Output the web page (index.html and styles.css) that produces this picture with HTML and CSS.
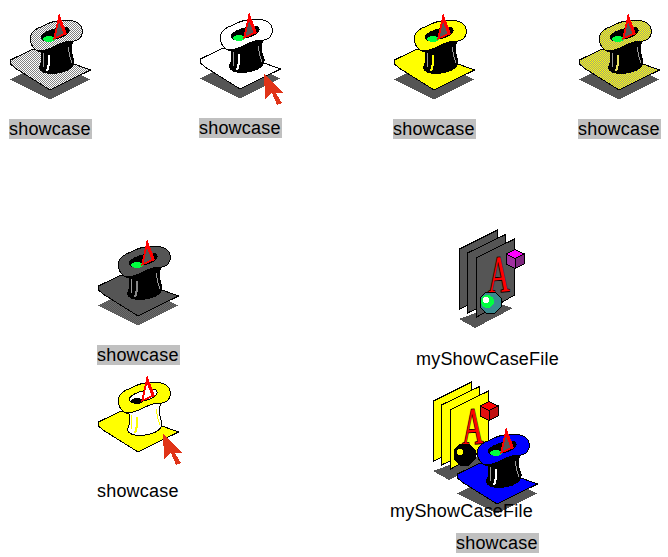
FILE: index.html
```html
<!DOCTYPE html>
<html lang="en">
<head>
<meta charset="utf-8">
<title>showcase icons</title>
<link rel="stylesheet" href="styles.css">
</head>
<body>
<svg class="defs" width="0" height="0" aria-hidden="true">
  <defs>
    <pattern id="d-grey" width="2" height="2" patternUnits="userSpaceOnUse">
      <rect width="2" height="2" fill="#fff"/><rect width="1" height="1" fill="#808080"/><rect x="1" y="1" width="1" height="1" fill="#808080"/>
    </pattern>
    <pattern id="d-yellow" width="2" height="2" patternUnits="userSpaceOnUse">
      <rect width="2" height="2" fill="#ffff00"/><rect width="1" height="1" fill="#a0a080"/><rect x="1" y="1" width="1" height="1" fill="#a0a080"/>
    </pattern>
    <pattern id="d-dark" width="2" height="2" patternUnits="userSpaceOnUse">
      <rect width="2" height="2" fill="#6a6a6a"/><rect width="1" height="1" fill="#555"/><rect x="1" y="1" width="1" height="1" fill="#555"/>
    </pattern>
    <symbol id="hat" viewBox="0 0 110 119">
      <path class="h-shadow" d="M10.5 79.5L50 59L90 79.5L49.5 99.5Z"/>
      <path class="h-plat" d="M10.5 60L33 49L90.5 70L50 90L15 68L10.5 64Z"/>
      <path class="h-crown" d="M40 48C43 57 42 63 39 68C42 73 50 74 57 73C67 72 75 67 74 60C71 55 71 47 73 39Z"/>
      <path class="h-stripe" d="M44 53C43 58 43 63 44 67M68 47C69 53 70 58 72 63"/>
      <path class="h-stripe2" d="M49 55C48 62 50 66 47 71"/>
      <path class="h-plat" d="M30 38C31 32 37 28 43 26C53 20 70 18 78 23C83 27 84 33 80 38C77 42 72 41 65 42C57 44 48 51 40 51C35 51 30 45 30 38Z"/>
      <path class="h-hole" d="M41 37C43 32 58 26 68 28C72 32 65 37 55 39C48 42 42 42 41 37Z"/>
      <ellipse class="h-green" cx="49" cy="39" rx="6" ry="3"/>
      <path class="h-tri-red" d="M59 13L53 40L67 34Z"/>
      <path class="h-tri" d="M59 22L55.5 37L63.5 33.5Z"/>
    </symbol>
    <symbol id="file" viewBox="0 0 150 122">
      <path class="f-shadow" d="M49 94L90 79L103 83L65 103Z"/>
      <path class="f-page" d="M49.5 24L87.5 5V67L49.5 84Z"/>
      <path class="f-page" d="M57.5 28L95.5 9.5V70L57.5 88Z"/>
      <path class="f-page" d="M66 33L104.5 14V70L66 92.5Z"/>
      <text class="f-letter" transform="translate(78 68) skewY(-5) scale(1 1.75)" x="0" y="0">A</text>
      <path class="f-cube-top" d="M96 29L105 24.5L114 29L105 33.5Z"/>
      <path class="f-cube-left" d="M96 29L105 33.5V43.5L96 39Z"/>
      <path class="f-cube-right" d="M105 33.5L114 29V39L105 43.5Z"/>
      <path class="f-ball" d="M76 67H85L91 73V82L85 88H76L70 82V73Z"/>
      <circle class="f-glow" cx="77.5" cy="76.5" r="6.5"/>
      <circle class="f-spot" cx="76" cy="75" r="3"/>
    </symbol>
    <symbol id="cursor" viewBox="0 0 20 33">
      <path d="M0 0L19 20H12L18 30L13 32L8 20L1 26Z"/>
    </symbol>
  </defs>
</svg>

<main class="desktop">
  <div class="item hat-a"><svg class="hat-svg"><use href="#hat"/></svg><span class="label selected">showcase</span></div>
  <div class="item hat-b"><svg class="hat-svg"><use href="#hat"/></svg><svg class="cursor"><use href="#cursor"/></svg><span class="label selected">showcase</span></div>
  <div class="item hat-c"><svg class="hat-svg"><use href="#hat"/></svg><span class="label selected">showcase</span></div>
  <div class="item hat-d"><svg class="hat-svg"><use href="#hat"/></svg><span class="label selected">showcase</span></div>
  <div class="item hat-e"><svg class="hat-svg"><use href="#hat"/></svg><span class="label selected">showcase</span></div>
  <div class="item hat-f"><svg class="hat-svg"><use href="#hat"/></svg><svg class="cursor"><use href="#cursor"/></svg><span class="label">showcase</span></div>
  <div class="item file-a"><svg class="file-svg"><use href="#file"/></svg><span class="label file-label">myShowCaseFile</span></div>
  <div class="item file-b"><svg class="file-svg"><use href="#file"/></svg></div>
  <div class="item hat-g"><svg class="hat-svg"><use href="#hat"/></svg><span class="label selected">showcase</span></div>
  <div class="item file-b-label"><span class="label file-label">myShowCaseFile</span></div>
</main>
</body>
</html>
```
FILE: styles.css
```css
html, body {
  margin: 0;
  padding: 0;
  background: #fff;
}

.defs {
  position: absolute;
}

.desktop {
  position: relative;
  width: 668px;
  height: 557px;
  overflow: hidden;
  font-family: "Liberation Sans", Arial, sans-serif;
  font-size: 18px;
  letter-spacing: 0.2px;
  color: #000;
}

.item {
  position: absolute;
  display: flex;
  flex-direction: column;
  align-items: flex-start;
}

.hat-svg {
  display: block;
  width: 110px;
  height: 119px;
  shape-rendering: crispEdges;
  --shadow: #555;
  --plat: #fff;
  --crown: #000;
  --stripe: #999;
  --stripe2: #fff;
  --hole: #000;
  --tri: #555;
  --green: #00ff40;
}

.label {
  display: block;
  margin-left: 9px;
  padding: 0 1px 0 0;
  height: 20px;
  line-height: 20px;
  white-space: nowrap;
}

.label.selected {
  background: #c0c0c0;
}

.cursor {
  position: absolute;
  left: 74px;
  top: 74px;
  width: 20px;
  height: 33px;
  fill: #e03418;
  shape-rendering: crispEdges;
}

.h-shadow { fill: var(--shadow); }
.h-plat { fill: var(--plat); stroke: #000; stroke-width: 1; }
.h-crown { fill: var(--crown); stroke: #000; stroke-width: 1; }
.h-stripe { fill: none; stroke: var(--stripe); stroke-width: 1; }
.h-stripe2 { fill: none; stroke: var(--stripe2); stroke-width: 2; }
.h-hole { fill: var(--hole); stroke: #000; stroke-width: 1; }
.h-green { fill: var(--green); }
.h-tri-red { fill: #ff0000; }
.h-tri { fill: var(--tri); }

.hat-a { left: 0; top: 0; }
.hat-a .hat-svg { --plat: url(#d-grey); }

.hat-b { left: 190px; top: -1px; }

.hat-c { left: 384px; top: 0; }
.hat-c .hat-svg { --plat: #ffff00; --stripe2: #ffff00; }

.hat-d { left: 569px; top: 0; }
.hat-d .hat-svg { --plat: url(#d-yellow); --stripe2: #e8e060; }

.hat-e { left: 88px; top: 226px; }
.hat-e .hat-svg { --plat: #555; --shadow: url(#d-dark); --stripe2: #888; }

.hat-f { left: 88px; top: 362px; }
.hat-f .cursor { left: 75px; top: 71px; }
.hat-f .hat-svg {
  --plat: #ffff00;
  --shadow: transparent;
  --crown: #fff;
  --stripe: #ffff00;
  --stripe2: #ffff00;
  --hole: #fff;
  --tri: #fff;
  --green: #000;
}

.hat-g { left: 447px; top: 414px; }
.hat-g .hat-svg { --plat: #0000ff; }

.file-svg {
  display: block;
  width: 150px;
  height: 122px;
  shape-rendering: crispEdges;
  --page: #555;
  --top: #ff00ff;
  --left: #a030a0;
  --right: #802880;
  --ball: #3a8a90;
  --glow: #00ff40;
  --spot: #fff;
}

.f-shadow { fill: #555; }
.f-page { fill: var(--page); stroke: #000; stroke-width: 1; }
.f-letter {
  font-family: "Liberation Serif", "Times New Roman", serif;
  font-size: 30px;
  letter-spacing: 0;
  fill: #ff0000;
  stroke: #000;
  stroke-width: 1;
  paint-order: stroke;
}
.f-cube-top { fill: var(--top); stroke: #000; stroke-width: 1; }
.f-cube-left { fill: var(--left); stroke: #000; stroke-width: 1; }
.f-cube-right { fill: var(--right); stroke: #000; stroke-width: 1; }
.f-ball { fill: var(--ball); stroke: #000; stroke-width: 1; }
.f-glow { fill: var(--glow); }
.f-spot { fill: var(--spot); }

.file-label {
  margin-left: 6px;
  margin-top: 2px;
}

.file-a { left: 410px; top: 225px; }
.file-b { left: 384px; top: 377px; }
.file-b .file-svg {
  --page: #ffff00;
  --top: #ff0000;
  --left: #e01010;
  --right: #c01010;
  --ball: #000;
  --glow: #000;
  --spot: #ffff00;
}
.file-b-label { left: 384px; top: 499px; }
```
